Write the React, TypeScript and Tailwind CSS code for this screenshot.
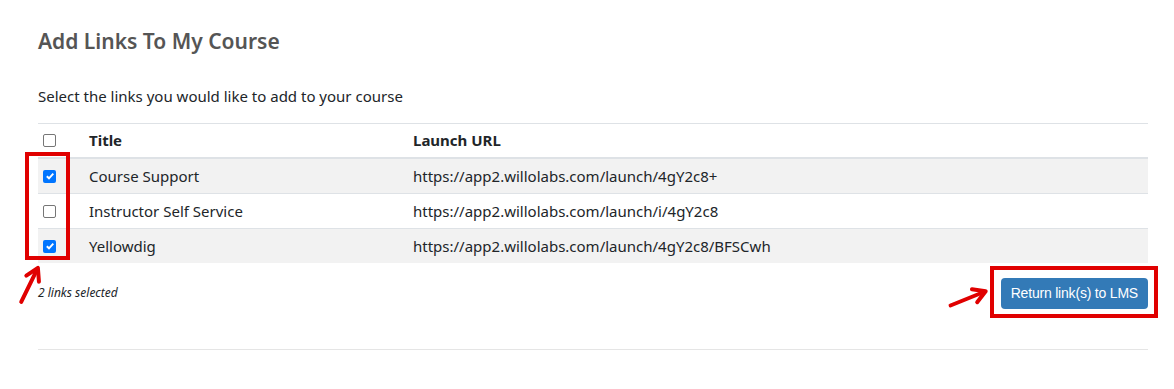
import { FC } from 'react';

const links = [
  { title: 'Course Support', url: 'https://app2.willolabs.com/launch/4gY2c8+', checked: true },
  { title: 'Instructor Self Service', url: 'https://app2.willolabs.com/launch/i/4gY2c8', checked: false },
  { title: 'Yellowdig', url: 'https://app2.willolabs.com/launch/4gY2c8/BFSCwh', checked: true },
];

const Box: FC<{ checked: boolean }> = ({ checked }) =>
  checked ? (
    <span className="w-[13px] h-[13px] rounded-[2px] bg-[#0075ff] flex items-center justify-center">
      <svg width="10" height="10" viewBox="0 0 10 10">
        <path d="M1.8 5.2 L4 7.3 L8.3 2.6" fill="none" stroke="white" strokeWidth="1.9" />
      </svg>
    </span>
  ) : (
    <span className="w-[13px] h-[13px] rounded-[2px] border border-[#767676] bg-white" />
  );

const Arrow: FC<{ className: string; rotate: string }> = ({ className, rotate }) => (
  <svg className={`absolute ${className}`} width="44" height="20" viewBox="0 0 44 20" style={{ transform: rotate }}>
    <path d="M2 10 L38 10" stroke="#e00000" strokeWidth="4" strokeLinecap="round" />
    <path d="M28 3 L40 10 L28 17" fill="none" stroke="#e00000" strokeWidth="4" strokeLinecap="round" strokeLinejoin="round" />
  </svg>
);

export default function App() {
  return (
    <div className="relative w-[1174px] h-[389px] bg-white font-['Noto_Sans',sans-serif] text-[#212529] overflow-hidden">
      <div className="px-[38px] pt-[26px] w-[1186px]">
        <h2 className="text-[21px] font-semibold text-[#555] leading-[30px]">Add Links To My Course</h2>
        <p className="mt-[28px] text-[15px] leading-[24px]">Select the links you would like to add to your course</p>

        <div className="mt-[15px] w-[1110px] border-t border-[#dee2e6] text-[15px]">
          <div className="flex h-[35px] items-center border-b-2 border-[#dee2e6] font-bold">
            <div className="w-[46px] pl-[5px] flex"><Box checked={false} /></div>
            <div className="w-[324px] pl-[5px]">Title</div>
            <div className="pl-[5px]">Launch URL</div>
          </div>
          {links.map((l, i) => (
            <div
              key={l.title}
              className={`flex items-center ${i < links.length - 1 ? 'h-[35px] border-b border-[#dee2e6]' : 'h-[34px]'} ${i % 2 === 0 ? 'bg-[#f2f2f2]' : 'bg-white'}`}
            >
              <div className="w-[46px] pl-[5px] flex"><Box checked={l.checked} /></div>
              <div className="w-[324px] pl-[5px]">{l.title}</div>
              <div className="pl-[5px]">{l.url}</div>
            </div>
          ))}
        </div>

        <div className="w-[1110px] flex justify-between items-start mt-[15px]">
          <p className="mt-[6px] text-[12px] italic">2 links selected</p>
          <button className="h-[31px] px-[10px] rounded-[4px] bg-[#337ab7] text-white text-[14px] font-['Liberation_Sans',sans-serif] tracking-[-0.2px]">
            Return link(s) to LMS
          </button>
        </div>

        <div className="w-[1110px] mt-[40px] border-t border-[#e5e5e5]" />
      </div>

      {/* annotations */}
      <div className="absolute left-[25px] top-[152px] w-[45px] h-[108px] border-4 border-[#e00000]" />
      <div className="absolute left-[990px] top-[266px] w-[168px] h-[52px] border-4 border-[#e00000]" />
      <Arrow className="left-[8px] top-[274px]" rotate="rotate(-64deg)" />
      <Arrow className="left-[947px] top-[288px]" rotate="rotate(-22deg)" />
    </div>
  );
}
